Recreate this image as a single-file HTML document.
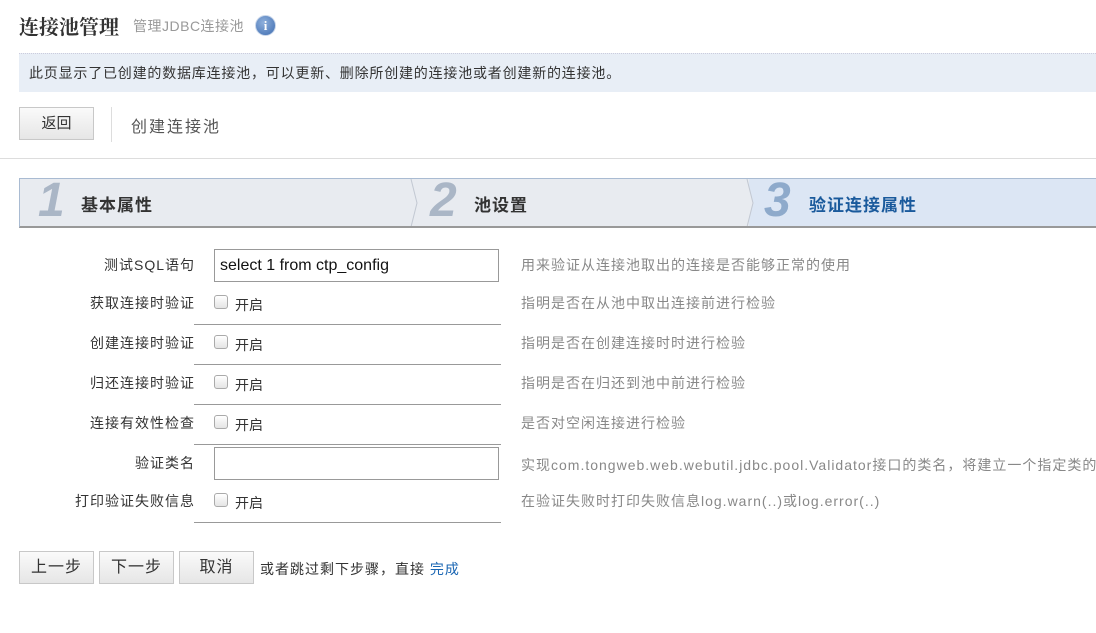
<!DOCTYPE html>
<html><head><meta charset="utf-8"><style>
*{margin:0;padding:0;box-sizing:border-box}
body{width:1096px;height:633px;overflow:hidden;background:#fff;font-family:"Liberation Sans","Noto Sans CJK SC",sans-serif;font-size:14px;color:#333;position:relative}
.a{position:absolute;white-space:nowrap}
.btn{position:absolute;height:33px;border:1px solid #c8c8c8;background:linear-gradient(#fafafa,#e6e6e6);font-size:16px;letter-spacing:1px;color:#333;text-align:center;line-height:31px}
.lbl{position:absolute;right:901px;font-size:14px;letter-spacing:1px;color:#333;line-height:20px;white-space:nowrap}
.desc{position:absolute;left:521px;font-size:14px;letter-spacing:1px;color:#888;line-height:20px;white-space:nowrap}
.cb{position:absolute;left:214px;width:14px;height:14px;border:1px solid #aaa;border-radius:3px;background:linear-gradient(#fff,#e4e4e4)}
.on{position:absolute;left:235px;font-size:14px;color:#333;line-height:20px}
.ul{position:absolute;left:194px;width:307px;height:1px;background:#999}
.inp{position:absolute;left:214px;width:285px;height:33px;border:1px solid #999;background:#fff;font-size:16px;color:#111;padding-left:5px;line-height:31px}
.num{position:absolute;font-size:48px;font-weight:bold;font-style:italic;color:#aab6c6;top:-6px;font-family:"Liberation Sans",sans-serif}
.st{position:absolute;font-size:17px;letter-spacing:1px;font-weight:bold;top:12px;color:#333}
</style></head><body>
<div class="a" style="left:19px;top:11px;font-size:20px;font-weight:bold;font-family:'Liberation Serif','Noto Serif CJK SC',serif;color:#333">连接池管理</div>
<div class="a" style="left:133px;top:16px;font-size:14px;letter-spacing:.5px;color:#999">管理JDBC连接池</div>
<div class="a" style="left:255px;top:15px;width:21px;height:21px;border-radius:50%;background:radial-gradient(circle at 40% 35%,#8fb0dc,#3d6cb0);border:1px solid #c8d6ea;color:#fff;font-weight:bold;font-size:13px;text-align:center;line-height:19px;font-family:'Liberation Serif',serif">i</div>
<div class="a" style="left:19px;top:53px;width:1077px;height:39px;background:#e8eef6;border-top:1px dotted #ccd;"></div>
<div class="a" style="left:29px;top:63px;font-size:14px;letter-spacing:.8px;color:#333">此页显示了已创建的数据库连接池，可以更新、删除所创建的连接池或者创建新的连接池。</div>
<div class="btn" style="left:19px;top:107px;width:75px;font-size:15px;letter-spacing:0">返回</div>
<div class="a" style="left:111px;top:107px;width:1px;height:35px;background:#ddd"></div>
<div class="a" style="left:131px;top:113px;font-size:16px;letter-spacing:2px;color:#555">创建连接池</div>
<div class="a" style="left:0;top:158px;width:1096px;height:1px;background:#ddd"></div>

<div class="a" style="left:19px;top:178px;width:1077px;height:50px;background:#e8ebf0;border-top:1px solid #a9bbd2;border-bottom:2px solid #999;border-left:1px solid #a9bbd2;overflow:hidden">
 <div class="num" style="left:18px">1</div><div class="st" style="left:61px">基本属性</div>
 <svg class="a" style="left:389px;top:0" width="14" height="48"><polyline points="2,0 8,24 2,48" fill="none" stroke="#c2c8d2" stroke-width="1"/></svg>
 <div class="num" style="left:410px">2</div><div class="st" style="left:454px">池设置</div>
 <div class="a" style="left:729px;top:0;width:400px;height:48px;background:#dce6f4"></div>
 <svg class="a" style="left:725px;top:0" width="14" height="48"><polyline points="2,0 8,24 2,48" fill="#e8ebf0" stroke="#c2c8d2" stroke-width="1"/></svg>
 <div class="num" style="left:744px;color:#8eaacb">3</div><div class="st" style="left:789px;color:#1a5a9c">验证连接属性</div>
</div>

<div class="lbl" style="top:255px">测试SQL语句</div>
<div class="inp" style="top:249px">select 1 from ctp_config</div>
<div class="desc" style="top:255px">用来验证从连接池取出的连接是否能够正常的使用</div>

<div class="lbl" style="top:293px">获取连接时验证</div><div class="cb" style="top:295px"></div><div class="on" style="top:295px">开启</div>
<div class="desc" style="top:293px">指明是否在从池中取出连接前进行检验</div><div class="ul" style="top:324px"></div>

<div class="lbl" style="top:333px">创建连接时验证</div><div class="cb" style="top:335px"></div><div class="on" style="top:335px">开启</div>
<div class="desc" style="top:333px">指明是否在创建连接时时进行检验</div><div class="ul" style="top:364px"></div>

<div class="lbl" style="top:373px">归还连接时验证</div><div class="cb" style="top:375px"></div><div class="on" style="top:375px">开启</div>
<div class="desc" style="top:373px">指明是否在归还到池中前进行检验</div><div class="ul" style="top:404px"></div>

<div class="lbl" style="top:413px">连接有效性检查</div><div class="cb" style="top:415px"></div><div class="on" style="top:415px">开启</div>
<div class="desc" style="top:413px">是否对空闲连接进行检验</div><div class="ul" style="top:444px"></div>

<div class="lbl" style="top:453px">验证类名</div>
<div class="inp" style="top:447px"></div>
<div class="desc" style="top:455px">实现com.tongweb.web.webutil.jdbc.pool.Validator接口的类名，将建立一个指定类的实例</div>

<div class="lbl" style="top:491px">打印验证失败信息</div><div class="cb" style="top:493px"></div><div class="on" style="top:493px">开启</div>
<div class="desc" style="top:491px">在验证失败时打印失败信息log.warn(..)或log.error(..)</div><div class="ul" style="top:522px"></div>

<div class="btn" style="left:19px;top:551px;width:75px">上一步</div>
<div class="btn" style="left:99px;top:551px;width:75px">下一步</div>
<div class="btn" style="left:179px;top:551px;width:75px">取消</div>
<div class="a" style="left:260px;top:559px;font-size:14px;letter-spacing:1px;color:#333">或者跳过剩下步骤，直接 <span style="color:#1a66b3">完成</span></div>
</body></html>
